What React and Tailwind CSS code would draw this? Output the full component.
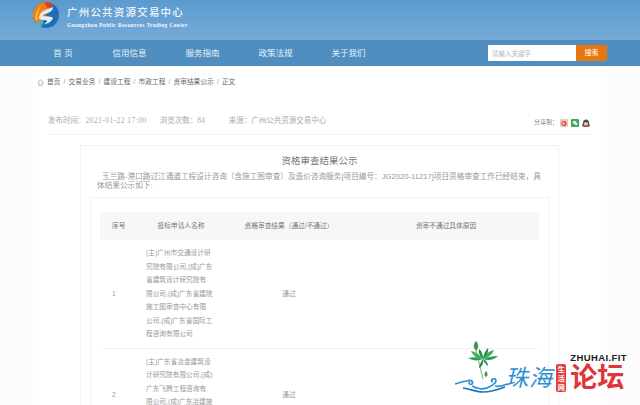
import React from "react";

const navItems = ["信用信息", "服务指南", "政策法规", "关于我们"];
const crumbs = ["首页", "交易业务", "建设工程", "市政工程", "资审结果公示", "正文"];

const rows = [
  {
    no: 1,
    lines: [
      "(主)广州市交通设计研",
      "究院有限公司,(成)广东",
      "省建筑设计研究院有",
      "限公司,(成)广东省建院",
      "施工图审查中心有限",
      "公司,(成)广东省国际工",
      "程咨询有限公司",
    ],
  },
  {
    no: 2,
    lines: [
      "(主)广东省冶金建筑设",
      "计研究院有限公司,(成)",
      "广东飞腾工程咨询有",
      "限公司,(成)广东冶建施",
      "工图审查有限公司",
      "",
    ],
  },
];

function Logo() {
  return (
    <svg width="28" height="28" viewBox="0 0 28 28" className="shrink-0">
      <circle cx="14" cy="14" r="13" fill="#1f6db5" />
      <path d="M14 1a13 13 0 0 0-11 20c1 2 3 4 5 5l6-12 6-12c-2-1-4-1-6-1z" fill="#ee7d1c" />
      <path d="M3 19c0-6 2-11 6-14-2 4-4 9-3 14z" fill="#f6b62c" />
      <path d="M13 1.100c4-.3 7 1 9 3l-6 3c-3-2-3-4-3-6z" fill="#d8402c" />
      <path d="M4 22c1 2 3 3.500 5 4l3-5-6-1z" fill="#3cb4dc" />
      <path d="M7 17c0-5 5-8 9-9l5-2c0 3-2 5-5 6-2 .7-5 1-5 2.500 0 1 3 .5 6 1l4 1c-1 4-5 6-9 7l3-3c1-1.500-2-1-4-1.500s-4-.5-4-2z" fill="#e6ebf0" />
    </svg>
  );
}

function Lotus() {
  return (
    <svg width="56" height="58" viewBox="0 0 56 58" className="shrink-0">
      <path d="M21 1c3 3 3 7 0 10-3-3-3-7 0-10z" fill="#3f9a50" />
      <path d="M21 10l7 29" stroke="#8cc096" strokeWidth="1.2" fill="none" />
      <path d="M13 18c5-1 10-1 15 1-5 2-10 2-15-1z" fill="#2f9c52" />
      <path d="M43 16c-5 0-10 1-15 3 5 2 11 1 15-3z" fill="#2f9c52" />
      <path d="M16 11c5 1 9 4 12 8-5 0-10-3-12-8z" fill="#3fae62" />
      <path d="M39 10c-5 1-9 4-11 9 5-1 9-4 11-9z" fill="#3fae62" />
      <path d="M28 19c-2 3-4 6-4 9 3-1 5-5 4-9zM28 19c1 3 3 6 5 7 0-3-2-6-5-7z" fill="#2b8d4a" />
      <path d="M24 9c3 2 4 6 4 10-3-3-5-6-4-10zM33 8c-3 3-5 7-5 11 3-3 6-7 5-11z" fill="#2b8d4a" />
      <path d="M31 31c2 2 2 5 0 6-2-1-2-4 0-6z" fill="#3f9a50" />
      <path d="M0 44c4-1 8-3 12-3 4-2 7 1 5 3-2 1-4-1-2-2M17 46c5 3 12 4 17 1 5-2 9-6 6-8-3-1-5 2-2 3M40 46c4 1 8 0 12-2" stroke="#2a90cf" strokeWidth="1.700" fill="none" />
      <path d="M8 48c8 1 13 4 20 4s14-2 22-5" stroke="#1d74b8" strokeWidth="1.700" fill="none" />
    </svg>
  );
}

function Watermark() {
  return (
    <div className="absolute left-[455px] top-[340px] flex h-[58px] w-[172px] items-end">
      <Lotus />
      <span className="mb-[5px] ml-[-6px] w-[52px] whitespace-nowrap text-[23px] leading-[30px] tracking-[1px] italic text-[#2d8fd0]">珠海</span>
      <span className="mb-[6px] flex h-[28px] w-[10px] items-center justify-center rounded-[2px] bg-[#e2403f] text-center text-[7px] leading-[9px] font-bold text-white">生活网</span>
      <div className="ml-[4px] flex flex-col">
        <span className="font-['Liberation_Sans'] text-[9.5px] leading-[12px] font-bold tracking-[0.4px] whitespace-nowrap text-[#222]">ZHUHAI.FIT</span>
        <span className="mb-[6px] text-[27px] leading-[28px] font-bold whitespace-nowrap text-[#e0353a]">论坛</span>
      </div>
    </div>
  );
}

function ShareIcons() {
  return (
    <div className="ml-[2px] flex gap-[3px]">
      <svg width="8" height="8" viewBox="0 0 8 8">
        <rect width="8" height="8" rx="1" fill="#ecc4ba" />
        <circle cx="4" cy="4.500" r="2.500" fill="#d9533f" />
        <circle cx="3.500" cy="4.500" r="1" fill="#fff" />
      </svg>
      <svg width="8" height="8" viewBox="0 0 8 8">
        <rect width="8" height="8" rx="1" fill="#3ea55a" />
        <circle cx="3.500" cy="3.500" r="1.800" fill="#e4f3e6" />
        <circle cx="5.200" cy="5" r="1.300" fill="#e4f3e6" />
      </svg>
      <svg width="8" height="8" viewBox="0 0 8 8">
        <path d="M1 4c0-2 1-3.500 3-3.500S7 2 7 4l1 3H0z" fill="#4c5048" />
        <rect x="2.200" y="3.500" width="3.600" height="3" fill="#e8d8c4" />
        <rect x="1" y="6.500" width="6" height="1.500" fill="#b8503c" />
      </svg>
    </div>
  );
}

export default function App() {
  return (
    <div className="relative h-[405px] w-[640px] overflow-hidden bg-[#fcfcfc] font-['Liberation_Sans','Noto_Sans_CJK_SC',sans-serif]">
      <header className="flex h-[40px] items-center bg-gradient-to-b from-[#5b9ace] to-[#76abd8] pb-[10px] pl-[32px]">
        <Logo />
        <div className="ml-[7px] pt-[3px] text-[#f2f7fb]">
          <div className="text-[10.5px] leading-[14px] font-medium tracking-[1.2px] whitespace-nowrap">广州公共资源交易中心</div>
          <div className="mt-[2px] font-['Liberation_Serif'] text-[5.5px] leading-[8px] font-bold tracking-[0.35px] whitespace-nowrap">Guangzhou Public Resources Trading Center</div>
        </div>
      </header>

      <nav className="flex h-[26px] items-center bg-[#4f8ebf] pl-[33px] pr-[33px]">
        <a className="w-[60px] text-center text-[8.5px] text-[#e6f0f8]">首 页</a>
        {navItems.map((item) => (
          <a key={item} className="w-[73px] text-center text-[8.5px] text-[#e6f0f8]">
            {item}
          </a>
        ))}
        <div className="ml-auto flex h-[16px]">
          <input
            placeholder="请输入关键字"
            className="h-full w-[88px] bg-white pl-[4px] text-[6.5px] outline-none placeholder:text-[#b5b5b5]"
          />
          <button className="h-full w-[31px] bg-[#e8760f] text-[7px] text-white">搜索</button>
        </div>
      </nav>

      <main className="mx-[33px] h-[339px] w-[574px] bg-white">
        <div className="flex h-[32px] items-center pl-[4px] pt-[1px] text-[6.7px] text-[#666]">
          <svg width="7" height="7" viewBox="0 0 10 10" className="mr-[3px]">
            <path d="M1 5l4-4 4 4M2.5 4.5V9h5V4.500" fill="none" stroke="#999" strokeWidth="1" />
          </svg>
          {crumbs.map((c, i) => (
            <span key={c} className="flex">
              {i > 0 && <span className="mx-[3.200px] text-[#999]">/</span>}
              {c}
            </span>
          ))}
        </div>

        <div className="mx-[15px] flex h-[37px] items-end border-b border-[#f3f3f3] pb-[8px] font-['Liberation_Serif','Noto_Sans_CJK_SC',sans-serif] text-[7.5px] text-[#aaa]">
          <span className="whitespace-nowrap">发布时间：<span className="tracking-[0.45px]">2021-01-22 17:00</span></span>
          <span className="ml-[13px] whitespace-nowrap">浏览次数：84</span>
          <span className="ml-[24px] whitespace-nowrap">来源：广州公共资源交易中心</span>
          <div className="mb-[-1px] ml-auto mr-[2px] flex items-center text-[6px] text-[#777]">
            分享到：
            <ShareIcons />
          </div>
        </div>

        <section className="ml-[47px] mt-[10px] w-[479px] border border-[#f3f3f3] pt-[8px]">
          <h1 className="text-center text-[9.5px] leading-[13px] font-normal text-[#777]">资格审查结果公示</h1>
          <p className="ml-[16px] mr-[15px] mt-[6px] text-[7.65px] leading-[8.500px] text-[#999] indent-[5px]">
            玉兰路-港口路过江通道工程设计咨询（含施工图审查）及造价咨询服务[项目编号：JG2020-11217]项目资格审查工作已经结束，具体结果公示如下:
          </p>
          <div className="mx-[9px] mt-[7px] border border-[#f3f3f3] px-[9px] pt-[14px]">
            <table className="w-[439px] table-fixed border-collapse text-[6.7px] text-[#999]">
              <thead>
                <tr className="h-[28px] bg-[#f7f7f7] text-[#777]">
                  <th className="w-[37px] pl-[12px] text-left font-normal">序号</th>
                  <th className="w-[88px] font-normal">投标申请人名称</th>
                  <th className="w-[128px] font-normal">资格审查结果（通过/不通过）</th>
                  <th className="font-normal">资审不通过具体原因</th>
                </tr>
              </thead>
              <tbody>
                {rows.map((row) => (
                  <tr key={row.no} className="border-b border-[#f3f3f3]">
                    <td className="pl-[12px]">{row.no}</td>
                    <td className="pt-[6px] pb-[7px] pl-[9px] leading-[13.5px] whitespace-nowrap">
                      {row.lines.map((line, i) => (
                        <div key={i} className="h-[13.5px]">{line}</div>
                      ))}
                    </td>
                    <td className="text-center">通过</td>
                    <td />
                  </tr>
                ))}
              </tbody>
            </table>
          </div>
        </section>
      </main>

      <Watermark />
    </div>
  );
}
